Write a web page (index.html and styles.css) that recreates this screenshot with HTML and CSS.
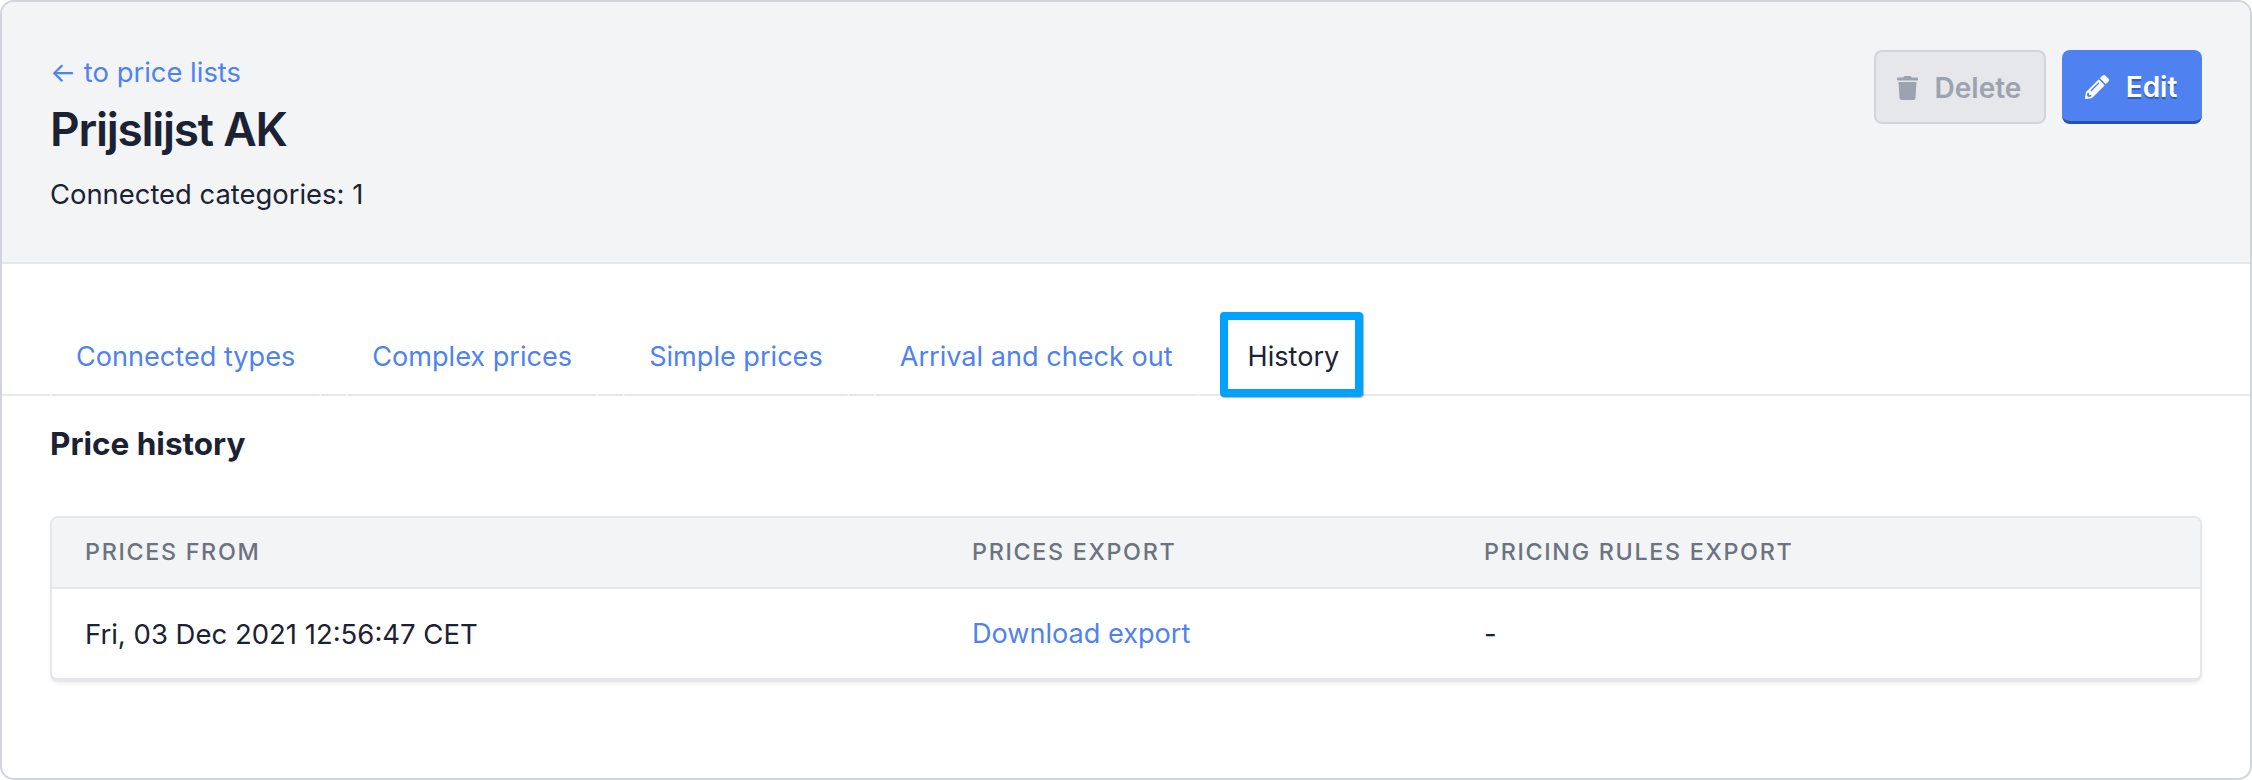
FILE: index.html
```html
<!DOCTYPE html>
<html lang="en">
<head>
<meta charset="utf-8">
<title>Prijslijst AK</title>
<link rel="stylesheet" href="styles.css">
</head>
<body>
<div class="panel">
  <header class="head">
    <div class="head-main">
      <a class="back" href="#">← to price lists</a>
      <h1 class="title">Prijslijst AK</h1>
      <p class="meta">Connected categories: 1</p>
    </div>
    <div class="actions">
      <button class="btn btn-disabled" type="button">
        <svg class="icon icon-trash" viewBox="0 0 448 512"><path fill="currentColor" d="M432 32H312l-9.4-18.7A24 24 0 0 0 281.1 0H166.8a23.72 23.72 0 0 0-21.4 13.3L136 32H16A16 16 0 0 0 0 48v32a16 16 0 0 0 16 16h416a16 16 0 0 0 16-16V48a16 16 0 0 0-16-16zM53.2 467a48 48 0 0 0 47.9 45h245.8a48 48 0 0 0 47.9-45L416 128H32z"/></svg>
        <span>Delete</span>
      </button>
      <button class="btn btn-primary" type="button">
        <svg class="icon icon-pencil" viewBox="0 0 512 512"><path fill="currentColor" d="M497.9 142.1l-46.1 46.1c-4.7 4.7-12.3 4.7-17 0l-111-111c-4.7-4.7-4.7-12.3 0-17l46.1-46.1c18.7-18.7 49.1-18.7 67.9 0l60.1 60.1c18.8 18.7 18.8 49.1 0 67.9zM284.2 99.8L21.6 362.4.4 483.9c-2.9 16.4 11.4 30.6 27.8 27.8l121.5-21.3 262.6-262.6c4.7-4.7 4.7-12.3 0-17l-111-111c-4.8-4.7-12.4-4.7-17.1 0zM124.1 339.9c-5.5-5.5-5.5-14.3 0-19.8l154-154c5.5-5.5 14.3-5.5 19.8 0s5.5 14.3 0 19.8l-154 154c-5.5 5.5-14.3 5.5-19.8 0zM88 424h48v36.3l-64.5 11.3-31.1-31.1L51.7 376H88v48z"/></svg>
        <span>Edit</span>
      </button>
    </div>
  </header>

  <nav class="tabs">
    <a class="tab" href="#">Connected types</a>
    <a class="tab" href="#">Complex prices</a>
    <a class="tab" href="#">Simple prices</a>
    <a class="tab" href="#">Arrival and check out</a>
    <a class="tab tab-active" href="#">History</a>
  </nav>

  <section class="content">
    <h2 class="section-title">Price history</h2>
    <div class="card">
      <table class="table">
        <colgroup>
          <col class="col-from">
          <col class="col-export">
          <col>
        </colgroup>
        <thead>
          <tr>
            <th>Prices from</th>
            <th>Prices export</th>
            <th>Pricing rules export</th>
          </tr>
        </thead>
        <tbody>
          <tr>
            <td>Fri, 03 Dec 2021 12:56:47 CET</td>
            <td><a class="link" href="#">Download export</a></td>
            <td>-</td>
          </tr>
        </tbody>
      </table>
    </div>
  </section>
</div>
</body>
</html>
```
FILE: styles.css
```css
* { box-sizing: border-box; }
html, body { margin: 0; padding: 0; }
body {
  background: #fff;
  color: #1a2233;
  font-family: Inter, "Liberation Sans", sans-serif;
  font-size: 27.4px;
  line-height: 40px;
}
a { color: #4f82f0; text-decoration: none; }
.panel {
  height: 780px;
  border: 2px solid #d1d5db;
  border-radius: 14px;
  overflow: hidden;
  background: #fff;
}
.head {
  display: flex;
  justify-content: space-between;
  align-items: flex-start;
  height: 262px;
  padding: 50px 48px 0;
  background: #f3f4f6;
  border-bottom: 2px solid #e5e7eb;
}
.back { display: block; }
.title {
  margin: 9px 0 0;
  font-size: 46px;
  line-height: 56px;
  font-weight: 600;
  letter-spacing: -1.25px;
}
.meta { margin: 17px 0 0; }
.actions { display: flex; gap: 16px; margin-top: -2px; }
.btn {
  display: flex;
  align-items: center;
  justify-content: center;
  gap: 17px;
  height: 74px;
  border-radius: 8px;
  font-family: inherit;
  font-size: 28px;
  font-weight: 600;
  padding: 2px 0 0 0;
}
.btn-disabled {
  width: 172px;
  padding-right: 2px;
  background: #e5e7eb;
  border: 2px solid #d1d5db;
  color: #9ca3af;
}
.btn-primary {
  width: 140px;
  padding-right: 2px;
  background: #4f82f0;
  border: 0;
  border-bottom: 3px solid #2a4fb0;
  color: #fff;
  text-shadow: 0 2px 0 #2c5cd0;
}
.icon { display: block; height: 24px; }
.icon-trash { width: 21px; }
.icon-pencil { width: 24px; }
.tabs {
  display: flex;
  gap: 25px;
  align-items: flex-end;
  height: 132px;
  padding-left: 48px;
  border-bottom: 2px solid #e5e7eb;
}
.tab {
  display: flex;
  align-items: center;
  height: 84px;
  margin-bottom: -2px;
  padding: 8px 24px 0;
  background: #fff;
  border-left: 2px solid #fff;
  border-right: 2px solid #fff;
  border-bottom: 2px solid #e5e7eb;
  font-size: 27.1px;
}
.tab-active {
  height: 85px;
  margin-bottom: -3px;
  margin-left: -4px;
  padding: 5px 16px 0 20px;
  color: #1a2233;
  border: 8px solid #00a2ff;
  border-radius: 4px;
  box-shadow: 1px 1px 1px rgba(0, 0, 0, .3);
}
.content { padding: 0 48px; }
.section-title {
  margin: 26px 0 0;
  font-size: 31.5px;
  line-height: 44px;
  font-weight: 700;
}
.card {
  margin-top: 50px;
  border: 2px solid #e5e7eb;
  border-bottom-width: 4px;
  border-radius: 8px;
  overflow: hidden;
  box-shadow: 0 2px 3px rgba(0, 0, 0, .06);
}
.table { width: 100%; border-collapse: collapse; table-layout: fixed; }
.col-from { width: 887px; }
.col-export { width: 512px; }
.table th {
  height: 70px;
  padding: 0 33px 2px;
  background: #f3f4f6;
  border-bottom: 2px solid #e5e7eb;
  color: #6b7280;
  font-size: 23.3px;
  font-weight: 500;
  letter-spacing: 1.7px;
  text-align: left;
  text-transform: uppercase;
}
.table td {
  height: 90px;
  padding: 0 33px;
  font-size: 27.5px;
}
.link { font-size: 27.1px; }
```
